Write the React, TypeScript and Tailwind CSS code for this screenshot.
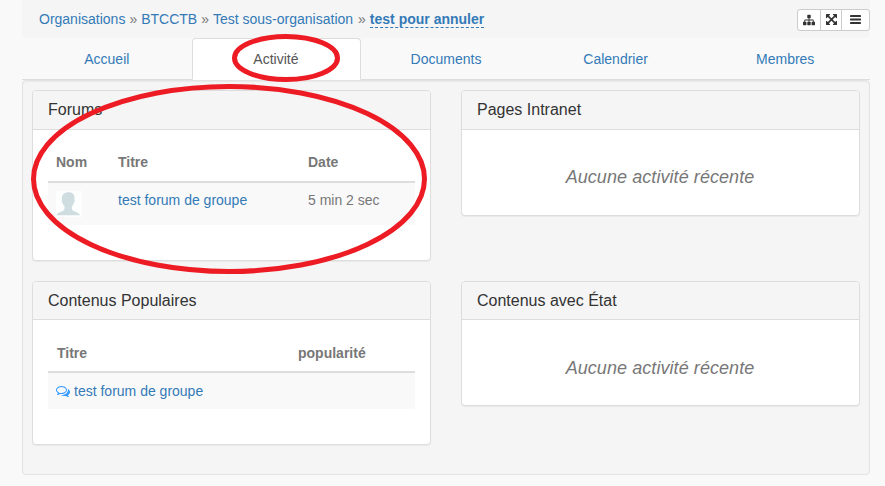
import type { ReactNode } from "react";

const link = "text-[#337ab7]";

function SitemapIcon() {
  return (
    <svg viewBox="0 0 1792 1792" className="h-3 w-3 fill-[#333]">
      <path d="M1792 1248v320q0 40-28 68t-68 28h-320q-40 0-68-28t-28-68v-320q0-40 28-68t68-28h96v-192h-512v192h96q40 0 68 28t28 68v320q0 40-28 68t-68 28h-320q-40 0-68-28t-28-68v-320q0-40 28-68t68-28h96v-192h-512v192h96q40 0 68 28t28 68v320q0 40-28 68t-68 28h-320q-40 0-68-28t-28-68v-320q0-40 28-68t68-28h96v-192q0-52 38-90t90-38h512v-192h-96q-40 0-68-28t-28-68v-320q0-40 28-68t68-28h320q40 0 68 28t28 68v320q0 40-28 68t-68 28h-96v192h512q52 0 90 38t38 90v192h96q40 0 68 28t28 68z" />
    </svg>
  );
}

function ExpandIcon() {
  return (
    <svg viewBox="0 0 1536 1536" className="h-[11px] w-[11px] fill-[#333]">
      <path d="M1283 413L928 768l355 355 144-144q29-31 70-14 39 17 39 59v448q0 26-19 45t-45 19h-448q-42 0-59-40-17-39 14-69l144-144-355-355-355 355 144 144q31 30 14 69-17 40-59 40H64q-26 0-45-19t-19-45v-448q0-42 40-59 39-17 69 14l144 144 355-355-355-355-144 144q-19 19-45 19-12 0-24-5-40-17-40-59V64q0-26 19-45T64 0h448q42 0 59 40 17 39-14 69L413 253l355 355 355-355-144-144q-31-30-14-69 17-40 59-40h448q26 0 45 19t19 45v448q0 42-39 59-13 5-25 5-26 0-45-19z" />
    </svg>
  );
}

function BarsIcon() {
  return (
    <svg viewBox="0 0 11 9" className="h-[9px] w-[11px] fill-[#333]">
      <rect width="11" height="2" rx="0.4" />
      <rect y="3.5" width="11" height="2" rx="0.4" />
      <rect y="7" width="11" height="2" rx="0.4" />
    </svg>
  );
}

function CommentsIcon() {
  return (
    <svg viewBox="0 0 1792 1792" className="h-3.5 w-3.5 fill-[#3399ff]">
      <path d="M704 384q-153 0-286 52t-211.5 141-78.5 191q0 82 53 158t149 132l97 56-35 84q34-20 62-39l44-31 53 10q78 14 153 14 153 0 286-52t211.5-141 78.5-191-78.5-191-211.5-141-286-52zm0-128q191 0 353.5 68.5t256.5 186.5 94 257-94 257-256.5 186.5-353.5 68.5q-86 0-176-16-124 88-278 128-36 9-86 16h-3q-11 0-20.5-8t-11.5-21q-1-3-1-6.5t.5-6.5 2-6l2.5-5 3.5-5.5 4-5 4.5-5 4-4.5q5-6 23-25t26-29.5 22.5-29 25-38.5 20.5-44q-124-72-195-177t-71-224q0-139 94-257t256.5-186.5 353.5-68.5zm822 1169q10 24 20.5 44t25 38.5 22.5 29 26 29.5 23 25q1 1 4 4.5t4.5 5 4 5 3.5 5.5l2.5 5 2 6 .5 6.5-1 6.5q-3 14-13 22t-22 7q-50-7-86-16-154-40-278-128-90 16-176 16-271 0-472-132 58 4 88 4 161 0 309-45t264-129q125-92 192-212t67-254q0-77-23-152 129 71 204 178t75 230q0 120-71 224.5t-195 176.5z" />
    </svg>
  );
}

function Avatar() {
  return (
    <svg viewBox="0 0 26 26" className="h-[26px] w-[26px]">
      <rect width="26" height="26" fill="#fdfefe" />
      <path
        d="M12.2 1.3c3.9-.3 6.3 1.9 6.3 5.5 0 .9-.1 1.7-.2 2.4.7.3.5 1.9-.5 2.8-.4 1.5-1 2.6-1.9 3.4v2.7c.6 1.9 2.7 2.3 4.6 3.1 1.8.7 3.1 1.3 3.5 3H.4c.4-1.7 1.7-2.3 3.5-3 1.9-.8 4-1.2 4.6-3.1v-2.7c-.9-.8-1.5-1.9-1.9-3.4-1-.9-1.2-2.5-.5-2.8-.8-4.5.9-7.7 6.1-7.9z"
        fill="#d0dde0"
      />
    </svg>
  );
}

function Panel({ title, size, header, children }: { title: string; size: string; header: string; children: ReactNode }) {
  return (
    <section className={`${size} flex w-[399px] flex-col overflow-hidden rounded border border-[#ddd] bg-white shadow-[0_1px_1px_rgba(0,0,0,0.05)]`}>
      <h3 className={`${header} flex shrink-0 items-center border-b border-[#ddd] bg-[#f5f5f5] px-[15px] text-base text-[#333]`}>
        {title}
      </h3>
      {children}
    </section>
  );
}

function Empty() {
  return (
    <p className="pt-[35px] pr-px text-center text-lg leading-6 tracking-[0.07px] text-[#777] italic">Aucune activité récente</p>
  );
}

const tabs = ["Accueil", "Activité", "Documents", "Calendrier", "Membres"];

export default function App() {
  return (
    <div className="relative h-[486px] w-[885px] overflow-hidden bg-[#f9f9f9] pr-[15px] pl-[22px] font-['Liberation_Sans',Arial,sans-serif] text-sm text-[#777]">
      <header className="flex h-[38px] items-center justify-between rounded-b bg-[#f5f5f5] pl-[17px]">
        <nav className="flex h-5 items-start gap-1 whitespace-pre leading-5">
          <a className={link}>Organisations</a>
          <span>»</span>
          <a className={link}>BTCCTB</a>
          <span>»</span>
          <a className={link}>Test sous-organisation</a>
          <span className="ml-px">»</span>
          <a className="h-[19px] border-b border-dashed border-[#337ab7] font-bold text-[#337ab7]">test pour annuler</a>
        </nav>
        <div className="mt-0.5 flex h-[22px] w-[73px] divide-x divide-[#ccc] rounded-[3px] border border-[#ccc] bg-white">
          <button className="flex w-[23px] items-center justify-center"><SitemapIcon /></button>
          <button className="flex w-[21px] items-center justify-center pb-px"><ExpandIcon /></button>
          <button className="flex flex-1 items-center justify-center pb-px"><BarsIcon /></button>
        </div>
      </header>

      <nav className="grid h-[42px] w-[848px] grid-cols-5 border-b border-[#ddd]">
        {tabs.map((tab) => (
          <a
            key={tab}
            className={
              tab === "Activité"
                ? "-mb-px rounded-t border border-b-transparent border-[#ddd] bg-white pt-[10px] pr-px text-center leading-5 text-[#555]"
                : "pt-[11px] text-center leading-5 text-[#337ab7]"
            }
          >
            {tab}
          </a>
        ))}
      </nav>

      <main className="grid h-[395px] w-[848px] grid-cols-[399px_399px] grid-rows-[191px_1fr] items-start gap-x-[30px] rounded border border-[#e3e3e3] bg-[#f5f5f5] pt-[9px] pl-[9px] shadow-[inset_0_1px_1px_rgba(0,0,0,0.05)]">
        <Panel title="Forums" size="h-[171px]" header="h-[39px]">
          <div className="px-[15px] pt-3">
            <table className="w-[367px] table-fixed text-left leading-5">
              <colgroup>
                <col className="w-[62px]" />
                <col className="w-[190px]" />
                <col />
              </colgroup>
              <thead>
                <tr className="h-10 border-b-2 border-[#ddd]">
                  <th className="pl-2">Nom</th>
                  <th className="pl-2">Titre</th>
                  <th className="pl-2">Date</th>
                </tr>
              </thead>
              <tbody>
                <tr className="h-[43px] bg-[#f9f9f9] align-top">
                  <td className="pt-2 pl-2"><Avatar /></td>
                  <td className="pt-[7px] pl-2"><a className={link}>test forum de groupe</a></td>
                  <td className="pt-[7px] pl-2">5 min 2 sec</td>
                </tr>
              </tbody>
            </table>
          </div>
        </Panel>
        <Panel title="Pages Intranet" size="h-[126px]" header="h-[39px]">
          <Empty />
        </Panel>
        <Panel title="Contenus Populaires" size="h-[164px]" header="h-[38px]">
          <div className="px-[15px] pt-3">
            <table className="w-[367px] table-fixed text-left leading-5">
              <colgroup>
                <col className="w-[242px]" />
                <col />
              </colgroup>
              <thead>
                <tr className="h-10 border-b-2 border-[#ddd]">
                  <th className="pt-[3px] pl-[9px]">Titre</th>
                  <th className="pt-[3px] pl-2">popularité</th>
                </tr>
              </thead>
              <tbody>
                <tr className="h-[37px] bg-[#f9f9f9]">
                  <td className="pl-2">
                    <a className="flex items-center gap-1 text-[#337ab7]"><CommentsIcon />test forum de groupe</a>
                  </td>
                  <td />
                </tr>
              </tbody>
            </table>
          </div>
        </Panel>
        <Panel title="Contenus avec État" size="h-[125px]" header="h-[38px]">
          <div className="pt-px">
            <Empty />
          </div>
        </Panel>
      </main>

      <svg viewBox="0 0 885 486" className="pointer-events-none absolute inset-0 h-full w-full fill-none stroke-[#ed1c24] stroke-[5]">
        <ellipse cx="286" cy="58" rx="51.5" ry="21.5" />
        <ellipse cx="229" cy="179" rx="195.5" ry="92.5" />
      </svg>
    </div>
  );
}
